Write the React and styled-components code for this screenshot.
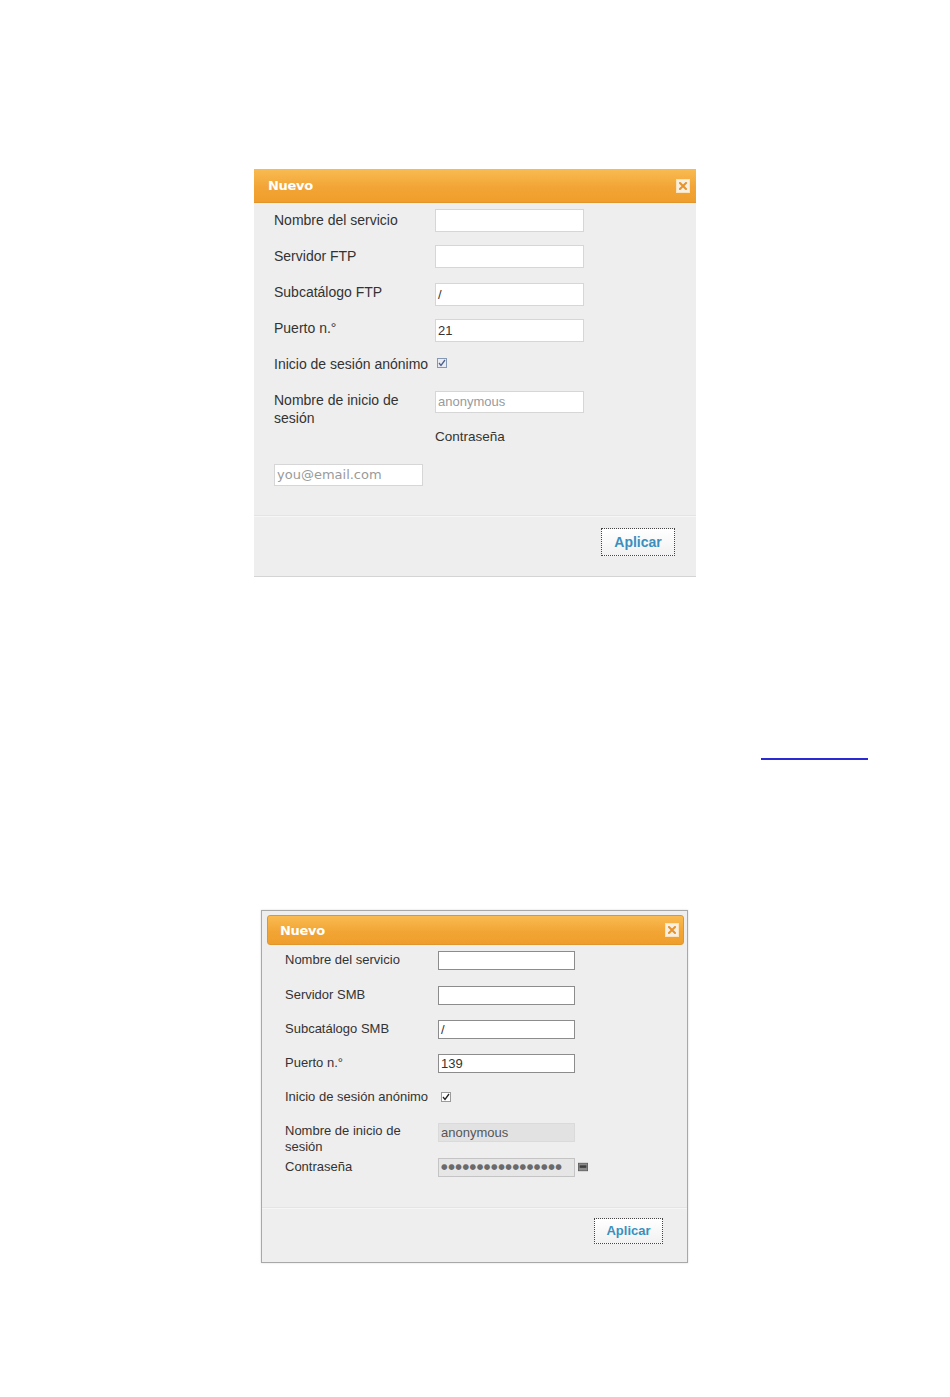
import React from "react";
import styled, { createGlobalStyle } from "styled-components";

const Global = createGlobalStyle`
  html, body { margin: 0; padding: 0; background: #ffffff; }
  body { font-family: "Liberation Sans", Arial, sans-serif; color: #333; }
  * { box-sizing: border-box; }
`;

const Page = styled.div`
  display: flex;
  flex-direction: column;
  align-items: flex-start;
  padding-top: 169px;
  width: 950px;
  min-height: 1397px;
`;

/* ---------- shared pieces ---------- */
const Header = styled.div`
  display: flex;
  align-items: center;
  justify-content: space-between;
  height: ${(p) => p.$h}px;
  padding: 0 ${(p) => p.$pr}px 0 ${(p) => p.$pl}px;
  background: linear-gradient(#f9bb52, #f2a535 55%, #ef9e2c);
  border-bottom: 1px solid #e2952a;
  border-radius: ${(p) => p.$r || 0}px;
  ${(p) => (p.$r ? "border: 1px solid #e0962c;" : "")}
`;

const Title = styled.span`
  color: #ffffff;
  font-weight: bold;
  font-size: 13px;
  font-family: "DejaVu Sans", Verdana, sans-serif;
  letter-spacing: -0.3px;
`;

const CloseBox = styled.span`
  display: flex;
  align-items: center;
  justify-content: center;
  width: 14px;
  height: 14px;
  background: #f6efe4;
  border: 1px solid #fbe2bb;
`;

const Close = () => (
  <CloseBox>
    <svg width="8" height="8" viewBox="0 0 8 8">
      <path d="M1 1 L7 7 M7 1 L1 7" stroke="#e8922a" strokeWidth="2" strokeLinecap="square" />
    </svg>
  </CloseBox>
);

const Row = styled.div`
  display: grid;
  grid-template-columns: ${(p) => p.$cols};
  align-items: start;
  height: ${(p) => p.$h}px;
`;

const Label = styled.div`
  font-size: ${(p) => p.$fs}px;
  line-height: ${(p) => p.$lh}px;
  color: #333;
  white-space: ${(p) => (p.$wrap ? "normal" : "nowrap")};
`;

const Field = styled.div`
  display: flex;
  align-items: center;
  flex: none;
  width: ${(p) => p.$w}px;
  height: ${(p) => p.$h}px;
  background: ${(p) => p.$bg || "#ffffff"};
  border: 1px solid ${(p) => p.$bc || "#d6d6d6"};
  font-size: 13px;
  line-height: ${(p) => p.$h - 2}px;
  padding-left: 2px;
  color: ${(p) => p.$color || "#333"};
  font-family: ${(p) => p.$font || '"Liberation Sans", Arial, sans-serif'};
  white-space: nowrap;
`;

const Check = styled.span`
  display: inline-flex;
  align-items: center;
  justify-content: center;
  width: 10px;
  height: 10px;
  margin: ${(p) => p.$m};
  background: ${(p) => p.$bg};
  border: 1px solid ${(p) => p.$bc};
`;

const FooterBar = styled.div`
  display: flex;
  justify-content: flex-end;
  border-top: 1px solid #e4e4e4;
  box-shadow: inset 0 1px 0 #f6f6f6;
  padding: ${(p) => p.$pad};
`;

const Button = styled.button`
  height: ${(p) => p.$h}px;
  width: ${(p) => p.$w}px;
  padding: 0;
  background: linear-gradient(#ffffff, #f1f1f1);
  border: 1px dotted #444;
  color: #3a8fbf;
  font-weight: bold;
  font-size: ${(p) => p.$fs}px;
  font-family: "Liberation Sans", Arial, sans-serif;
  cursor: pointer;
`;

/* ---------- dialog 1 ---------- */
const Dialog1 = styled.div`
  margin-left: 254px;
  width: 442px;
  background: #eeeeee;
  border-bottom: 1px solid #d4d4d4;
`;

const Body1 = styled.div`
  padding: 6px 0 29px 20px;
`;

const FieldCol = styled.div`
  display: flex;
  flex-direction: column;
  align-items: flex-start;
`;

const SubLabel = styled.div`
  margin-top: 15px;
  font-size: 13.5px;
  line-height: 18px;
  color: #333;
`;

const EmailWrap = styled.div`
  margin-top: 18px;
`;

/* ---------- link ---------- */
const LinkLine = styled.a`
  display: block;
  margin: 181px 0 0 761px;
  width: 107px;
  height: 2px;
  background: #2a2ad2;
`;

/* ---------- dialog 2 ---------- */
const Dialog2 = styled.div`
  margin: 150px 0 0 261px;
  width: 427px;
  background: #eeeeee;
  border: 1px solid #a8a8a8;
  box-shadow: 0 0 2px rgba(0, 0, 0, 0.15);
`;

const HeaderWrap = styled.div`
  padding: 4px 3px 0 5px;
`;

const Body2 = styled.div`
  padding: 6px 0 31px 23px;
`;

const PwRow = styled.div`
  display: flex;
  align-items: center;
  gap: 3px;
`;

const Dots = styled.span`
  font-family: "DejaVu Sans", sans-serif;
  font-size: 7.5px;
  line-height: 10px;
  letter-spacing: 0.6px;
  color: #6a6a6a;
`;

const KeyIcon = () => (
  <svg width="12" height="10" viewBox="0 0 12 10">
    <rect x="0.5" y="0.5" width="11" height="9" fill="#8a8a8a" stroke="#5a5a5a" />
    <rect x="2" y="3" width="8" height="3" fill="#3e3e3e" />
  </svg>
);

const cols1 = "161px 149px";
const cols2 = "153px 150px";

export default function App() {
  return (
    <>
      <Global />
      <Page>
        <Dialog1>
          <Header $h={34} $pl={14} $pr={6}>
            <Title>Nuevo</Title>
            <Close />
          </Header>
          <Body1>
            <Row $cols={cols1} $h={36}>
              <Label $fs={14} $lh={22}>Nombre del servicio</Label>
              <Field $w={149} $h={23} />
            </Row>
            <Row $cols={cols1} $h={38}>
              <Label $fs={14} $lh={22}>Servidor FTP</Label>
              <Field $w={149} $h={23} />
            </Row>
            <Row $cols={cols1} $h={36}>
              <Label $fs={14} $lh={18}>Subcatálogo FTP</Label>
              <Field $w={149} $h={23}>/</Field>
            </Row>
            <Row $cols={cols1} $h={36}>
              <Label $fs={14} $lh={18}>Puerto n.°</Label>
              <Field $w={149} $h={23}>21</Field>
            </Row>
            <Row $cols={cols1} $h={36}>
              <Label $fs={14} $lh={18}>Inicio de sesión anónimo</Label>
              <Check $m="3px 0 0 2px" $bg="#e8ecf2" $bc="#8498b4">
                <svg width="8" height="8" viewBox="0 0 8 8">
                  <path d="M1 4 L3 6.5 L7 1" stroke="#4d5f8c" strokeWidth="1.3" fill="none" />
                </svg>
              </Check>
            </Row>
            <Row $cols={cols1} $h={55}>
              <Label $fs={14} $lh={18} $wrap>Nombre de inicio de sesión</Label>
              <FieldCol>
                <Field $w={149} $h={22} $color="#9a9a9a">anonymous</Field>
                <SubLabel>Contraseña</SubLabel>
              </FieldCol>
            </Row>
            <EmailWrap>
              <Field
                $w={149}
                $h={22}
                $color="#9a9a9a"
                $font='"DejaVu Sans", Verdana, sans-serif'
              >
                you@email.com
              </Field>
            </EmailWrap>
          </Body1>
          <FooterBar $pad="12px 21px 20px 0">
            <Button $w={74} $h={28} $fs={14}>Aplicar</Button>
          </FooterBar>
        </Dialog1>

        <LinkLine href="#" aria-label="enlace" />

        <Dialog2>
          <HeaderWrap>
            <Header $h={30} $pl={12} $pr={4} $r={3}>
              <Title>Nuevo</Title>
              <Close />
            </Header>
          </HeaderWrap>
          <Body2>
            <Row $cols={cols2} $h={35}>
              <Label $fs={13} $lh={17}>Nombre del servicio</Label>
              <Field $w={137} $h={19} $bc="#8c8c8c" />
            </Row>
            <Row $cols={cols2} $h={34}>
              <Label $fs={13} $lh={17}>Servidor SMB</Label>
              <Field $w={137} $h={19} $bc="#8c8c8c" />
            </Row>
            <Row $cols={cols2} $h={34}>
              <Label $fs={13} $lh={17}>Subcatálogo SMB</Label>
              <Field $w={137} $h={19} $bc="#8c8c8c">/</Field>
            </Row>
            <Row $cols={cols2} $h={34.5}>
              <Label $fs={13} $lh={17}>Puerto n.°</Label>
              <Field $w={137} $h={19} $bc="#8c8c8c">139</Field>
            </Row>
            <Row $cols={cols2} $h={34}>
              <Label $fs={13} $lh={16}>Inicio de sesión anónimo</Label>
              <Check $m="3px 0 0 3px" $bg="#ffffff" $bc="#9a9a9a">
                <svg width="8" height="8" viewBox="0 0 8 8">
                  <path d="M1 4 L3 6.5 L7 1" stroke="#222" strokeWidth="1.3" fill="none" />
                </svg>
              </Check>
            </Row>
            <Row $cols={cols2} $h={35}>
              <Label $fs={13} $lh={16} $wrap>Nombre de inicio de sesión</Label>
              <Field $w={137} $h={19} $bg="#e2e2e2" $bc="#dadada" $color="#555">
                anonymous
              </Field>
            </Row>
            <Row $cols={cols2} $h={18}>
              <Label $fs={13} $lh={18}>Contraseña</Label>
              <PwRow>
                <Field $w={137} $h={19} $bg="#e6e6e6" $bc="#c4c4c4" $color="#666">
                  <Dots>●●●●●●●●●●●●●●●●●</Dots>
                </Field>
                <KeyIcon />
              </PwRow>
            </Row>
          </Body2>
          <FooterBar $pad="10px 24px 18px 0">
            <Button $w={69} $h={26} $fs={13}>Aplicar</Button>
          </FooterBar>
        </Dialog2>
      </Page>
    </>
  );
}
